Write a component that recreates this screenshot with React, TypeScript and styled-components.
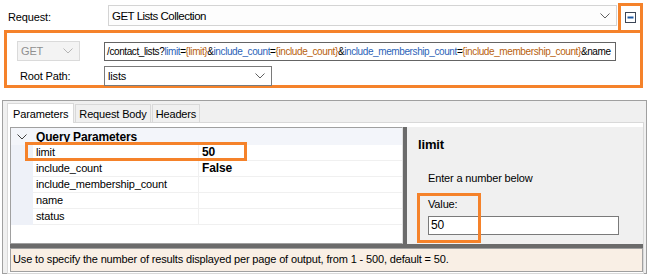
import styled, { createGlobalStyle } from 'styled-components'

const GlobalStyle = createGlobalStyle`
    body {
        margin: 0;
        background: #fff;
        font-family: 'Liberation Sans', Arial, sans-serif;
        font-size: 11px;
        letter-spacing: -0.15px;
        color: #000;
    }
`

const orange = '#f5822a'

const Page = styled.div`
    width: 655px;
    height: 276px;
    overflow: hidden;
    display: flex;
    flex-direction: column;
`

const RequestRow = styled.div`
    display: flex;
    align-items: flex-start;
    height: 30px;
    padding-top: 3px;
    box-sizing: border-box;
`

const RequestLabel = styled.div`
    width: 100px;
    padding-left: 8px;
    margin-top: 8px;
    line-height: 13px;
`

const Combo = styled.div<{ $width: number; $height: number; $border: string; $muted?: boolean }>`
    box-sizing: border-box;
    width: ${({ $width }) => $width}px;
    height: ${({ $height }) => $height}px;
    border: 1px solid ${({ $border }) => $border};
    background: ${({ $muted }) => ($muted ? '#f3f3f3' : '#fff')};
    color: ${({ $muted }) => ($muted ? '#8f8f8f' : '#000')};
    display: flex;
    align-items: center;
    justify-content: space-between;
    padding: 0 6px 0 3px;
`

const MainCombo = styled(Combo)`
    margin-top: 2px;
    font-size: 11.5px;
    letter-spacing: -0.5px;
    background: #fdfdfd;
`

const MinusBox = styled.div`
    box-sizing: border-box;
    margin-left: 1px;
    width: 25px;
    height: 27px;
    border: 3px solid ${orange};
    border-bottom: 0;
    display: flex;
    align-items: center;
    justify-content: center;
    padding-bottom: 1px;
`

const EndpointBox = styled.div`
    box-sizing: border-box;
    margin-left: 4px;
    width: 639px;
    height: 58px;
    border: 3px solid ${orange};
    padding: 8px 0 0 10px;
    display: grid;
    grid-template-columns: 87px auto;
    row-gap: 5px;
    align-items: center;
    align-content: start;
`

const FieldLabel = styled.div`
    padding-left: 3px;
`

const UrlInput = styled.div`
    box-sizing: border-box;
    width: 512px;
    height: 19px;
    border: 1px solid #646464;
    background: #fff;
    padding-left: 2px;
    font-size: 10px;
    letter-spacing: -0.4px;
    line-height: 17px;
    white-space: nowrap;
    overflow: hidden;
`

const Param = styled.span`
    color: #2b63b8;
`

const Placeholder = styled.span`
    color: #b8620e;
`

const Frame = styled.div`
    box-sizing: border-box;
    margin: 12px 0 0 2px;
    width: 645px;
    height: 174px;
    border: 1px solid #a0a0a0;
    background: #f0f0f0;
    padding: 1px 2px 1px 4px;
    display: flex;
    flex-direction: column;
`

const TabStrip = styled.div`
    display: flex;
    align-items: flex-end;
    height: 20px;
`

const Tab = styled.div<{ $active?: boolean }>`
    box-sizing: border-box;
    height: ${({ $active }) => ($active ? 20 : 18)}px;
    padding: 0 ${({ $active }) => ($active ? 5 : 3)}px;
    margin-right: 1px;
    border: 1px solid #d9d9d9;
    border-bottom: 0;
    background: ${({ $active }) => ($active ? '#fff' : '#f0f0f0')};
    display: flex;
    align-items: center;
    position: relative;
    top: ${({ $active }) => ($active ? 1 : 0)}px;
`

const TabPage = styled.div`
    flex: 1;
    border: 1px solid #d9d9d9;
    background: #fff;
    padding: 4px 0 1px 2px;
    display: flex;
    flex-direction: column;
`

const Split = styled.div`
    display: flex;
    height: 117px;
`

const Grid = styled.div`
    position: relative;
    box-sizing: border-box;
    width: 393px;
    border: 1px solid #a0a0a0;
    border-right-color: #e0e0e0;
    background: #fff;
`

const CategoryRow = styled.div`
    display: flex;
    height: 17px;
    background: #f3f5fa;
    align-items: center;
`

const Margin = styled.div<{ $fill?: boolean }>`
    width: 22px;
    align-self: stretch;
    display: flex;
    align-items: center;
    justify-content: center;
    background: ${({ $fill }) => ($fill ? '#eef1f8' : 'transparent')};
`

const CategoryName = styled.div`
    padding-left: 3px;
    font-weight: bold;
    font-size: 12px;
`

const Row = styled.div`
    display: flex;
    height: 16px;
`

const NameCell = styled.div`
    box-sizing: border-box;
    width: 166px;
    padding-left: 3px;
    border-right: 1px solid #f0f0f0;
    border-bottom: 1px solid #f0f0f0;
    line-height: 15px;
`

const ValueCell = styled.div`
    flex: 1;
    padding-left: 3px;
    border-bottom: 1px solid #f0f0f0;
    font-weight: bold;
    font-size: 12px;
    line-height: 15px;
`

const Highlight = styled.div<{ $left: number; $top: number; $w: number; $h: number }>`
    position: absolute;
    box-sizing: border-box;
    left: ${({ $left }) => $left}px;
    top: ${({ $top }) => $top}px;
    width: ${({ $w }) => $w}px;
    height: ${({ $h }) => $h}px;
    border: 3px solid ${orange};
    pointer-events: none;
`

const VSplitter = styled.div`
    width: 4px;
    background: #6b6b6b;
`

const DetailPanel = styled.div`
    position: relative;
    flex: 1;
    background: #f0f0f0;
    padding: 10px 0 0 11px;
    display: flex;
    flex-direction: column;
`

const DetailTitle = styled.div`
    font-weight: bold;
    font-size: 13px;
    line-height: 16px;
`

const DetailText = styled.div<{ $gap: number }>`
    margin-top: ${({ $gap }) => $gap}px;
    padding-left: 10px;
    line-height: 16px;
`

const ValueInput = styled.div`
    box-sizing: border-box;
    margin: 4px 0 0 10px;
    width: 191px;
    height: 19px;
    border: 1px solid #7a7a7a;
    background: #fff;
    padding-left: 2px;
    font-size: 12px;
    line-height: 17px;
`

const HSplitter = styled.div`
    height: 4px;
    background: #6b6b6b;
`

const Description = styled.div`
    box-sizing: border-box;
    height: 24px;
    border: 1px solid #a0a0a0;
    background: #f9efe5;
    padding-left: 2px;
    line-height: 20px;
`

function Chevron({ color = '#606060' }: { color?: string }) {
    return (
        <svg width="10" height="6" viewBox="0 0 10 6">
            <path d="M0.5 0.5 L5 5 L9.5 0.5" fill="none" stroke={color} strokeWidth="1" />
        </svg>
    )
}

function CollapseIcon() {
    return (
        <svg width="11" height="11" viewBox="0 0 11 11">
            <rect x="0.5" y="0.5" width="10" height="10" fill="#fff" stroke="#3c4656" />
            <rect x="2.5" y="4.5" width="6" height="2" fill="#1d5aa6" />
        </svg>
    )
}

const params = ['limit', 'include_count', 'include_membership_count', 'name', 'status']
const values: Record<string, string> = { limit: '50', include_count: 'False' }

export default function App() {
    return (
        <Page>
            <GlobalStyle />
            <RequestRow>
                <RequestLabel>Request:</RequestLabel>
                <MainCombo $width={509} $height={21} $border="#d4d4d4">
                    <span>GET Lists Collection</span>
                    <Chevron />
                </MainCombo>
                <MinusBox>
                    <CollapseIcon />
                </MinusBox>
            </RequestRow>
            <EndpointBox>
                <Combo $width={63} $height={20} $border="#dadada" $muted>
                    <span>GET</span>
                    <Chevron color="#b5b5b5" />
                </Combo>
                <UrlInput>
                    /contact_lists?<Param>limit</Param>=<Placeholder>{'{limit}'}</Placeholder>&amp;
                    <Param>include_count</Param>=<Placeholder>{'{include_count}'}</Placeholder>&amp;
                    <Param>include_membership_count</Param>=
                    <Placeholder>{'{include_membership_count}'}</Placeholder>&amp;name
                </UrlInput>
                <FieldLabel>Root Path:</FieldLabel>
                <Combo $width={168} $height={20} $border="#7a7a7a">
                    <span>lists</span>
                    <Chevron />
                </Combo>
            </EndpointBox>
            <Frame>
                <TabStrip>
                    <Tab $active>Parameters</Tab>
                    <Tab>Request Body</Tab>
                    <Tab>Headers</Tab>
                </TabStrip>
                <TabPage>
                    <Split>
                        <Grid>
                            <CategoryRow>
                                <Margin>
                                    <Chevron color="#404040" />
                                </Margin>
                                <CategoryName>Query Parameters</CategoryName>
                            </CategoryRow>
                            {params.map((p) => (
                                <Row key={p}>
                                    <Margin $fill />
                                    <NameCell>{p}</NameCell>
                                    <ValueCell>{values[p] ?? ''}</ValueCell>
                                </Row>
                            ))}
                            <Highlight $left={14} $top={14} $w={222} $h={19} />
                        </Grid>
                        <VSplitter />
                        <DetailPanel>
                            <DetailTitle>limit</DetailTitle>
                            <DetailText $gap={17}>Enter a number below</DetailText>
                            <DetailText $gap={10}>Value:</DetailText>
                            <ValueInput>50</ValueInput>
                            <Highlight $left={10} $top={66} $w={64} $h={50} />
                        </DetailPanel>
                    </Split>
                    <HSplitter />
                    <Description>
                        Use to specify the number of results displayed per page of output, from 1 - 500, default = 50.
                    </Description>
                </TabPage>
            </Frame>
        </Page>
    )
}
